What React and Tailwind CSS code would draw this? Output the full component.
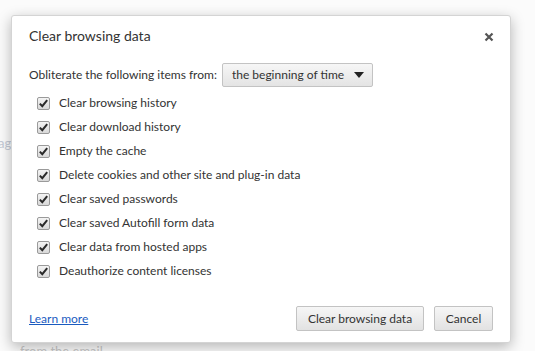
import React from "react";

const items = [
  "Clear browsing history",
  "Clear download history",
  "Empty the cache",
  "Delete cookies and other site and plug-in data",
  "Clear saved passwords",
  "Clear saved Autofill form data",
  "Clear data from hosted apps",
  "Deauthorize content licenses",
];

function Check() {
  return (
    <span className="flex h-[13px] w-[13px] shrink-0 items-center justify-center rounded-[2px] border border-[#9a9a9a] bg-gradient-to-b from-[#f4f4f4] to-[#d8d8d8]">
      <svg width="11" height="11" viewBox="0 0 11 11">
        <path d="M1.8 5.6 L4.3 8.2 L9.2 2.2" fill="none" stroke="#2a2a2a" strokeWidth="2" />
      </svg>
    </span>
  );
}

export default function App() {
  return (
    <div
      className="relative h-[351px] w-[535px] overflow-hidden bg-[#fbfbfb] text-[#333]"
      style={{ fontFamily: 'Lato, "Open Sans", sans-serif' }}
    >
      <span className="absolute left-[-2px] top-[134px] text-[13px] text-[#c4cad6]">ag</span>
      <span className="absolute left-[20px] top-[342px] text-[13px] text-[#c8c8c8]">from the email</span>
      <div className="absolute left-[11px] top-[15px] flex h-[328px] w-[500px] flex-col rounded-[3px] border border-[#d4d4d4] bg-white shadow-[0_4px_14px_rgba(0,0,0,0.28)]">
        <div className="flex items-center justify-between pl-[17px] pr-[16px] pt-[10px]">
          <span className="text-[14px] leading-[20px]">Clear browsing data</span>
          <svg width="10" height="10" viewBox="0 0 10 10" className="mt-[1px]">
            <path d="M1.5 1.5 L8.5 8.5 M8.5 1.5 L1.5 8.5" stroke="#555" strokeWidth="2.2" />
          </svg>
        </div>
        <div className="mt-[17px] flex items-center pl-[17px] text-[12px]">
          <span>Obliterate the following items from:</span>
          <div className="ml-[5px] flex h-[24px] w-[151px] items-center justify-between rounded-[2px] border border-[#c3c3c3] bg-gradient-to-b from-[#f6f6f6] to-[#e4e4e4] pl-[9px] pr-[8px] text-[#333]">
            <span>the beginning of time</span>
            <svg width="10" height="6" viewBox="0 0 10 6">
              <path d="M0 0 L10 0 L5 6 Z" fill="#222" />
            </svg>
          </div>
        </div>
        <div className="mt-[4px] flex flex-col pl-[25px] text-[12px]">
          {items.map((t) => (
            <div key={t} className="flex h-[24px] items-center gap-[9px]">
              <Check />
              <span>{t}</span>
            </div>
          ))}
        </div>
        <div className="mt-auto flex items-center justify-between pb-[11px] pl-[17px] pr-[17px] text-[12px]">
          <a className="text-[#1a5bbf] underline">Learn more</a>
          <div className="flex gap-[10px]">
            <button className="h-[25px] w-[128px] rounded-[2px] border border-[#c3c3c3] bg-gradient-to-b from-[#f6f6f6] to-[#e2e2e2] text-[12px] text-[#333]">
              Clear browsing data
            </button>
            <button className="h-[25px] w-[59px] rounded-[2px] border border-[#c3c3c3] bg-gradient-to-b from-[#f6f6f6] to-[#e2e2e2] text-[12px] text-[#333]">
              Cancel
            </button>
          </div>
        </div>
      </div>
    </div>
  );
}
